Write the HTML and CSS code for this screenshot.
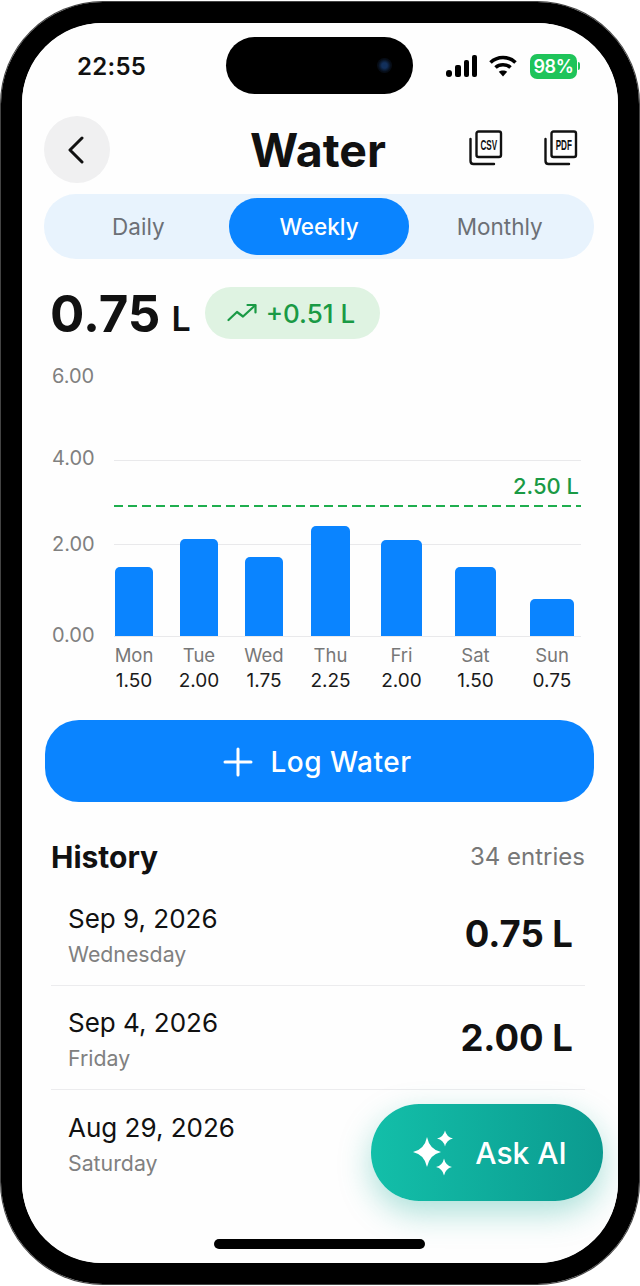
FILE: index.html
```html
<!DOCTYPE html>
<html lang="en">
<head>
    <meta charset="UTF-8">
    <meta name="viewport" content="width=device-width, initial-scale=1.0">
    <title>Water</title>
    <link rel="stylesheet" href="styles.css">
</head>
<body>

<div class="phone">
    <div class="screen">
        <div class="island"><span class="camera"></span></div>

        <div class="status-bar">
            <span class="time">22:55</span>
            <div class="status-icons">
                <svg class="signal" width="32" height="22" viewBox="0 0 32 22" fill="#000">
                    <rect x="0" y="15" width="6" height="7" rx="3"/>
                    <rect x="9" y="10" width="6" height="12" rx="2"/>
                    <rect x="18" y="5" width="5" height="17" rx="2"/>
                    <rect x="26" y="0" width="5" height="22" rx="2"/>
                </svg>
                <svg class="wifi" width="28" height="22" viewBox="0 0 28 22" fill="none" stroke="#000" stroke-width="3.6">
                    <path d="M1.5 7.5C8.5 .8 19.5 .8 26.5 7.5"/>
                    <path d="M6.5 12.5C10.5 8.8 17.5 8.8 21.5 12.5"/>
                    <path d="M14 21.5L9.8 16.8C12 15 16 15 18.2 16.8Z" fill="#000" stroke="none"/>
                </svg>
                <div class="battery">98%</div>
            </div>
        </div>

        <header class="top-bar">
            <button class="back-btn" type="button" aria-label="Back">
                <svg width="18" height="28" viewBox="0 0 18 28" fill="none" stroke="#111" stroke-width="3" stroke-linecap="round" stroke-linejoin="round">
                    <path d="M15 2L3 14L15 26"/>
                </svg>
            </button>
            <h1>Water</h1>
            <div class="export-icons">
                <svg width="36" height="36" viewBox="0 0 36 36" fill="none" stroke="#111" stroke-width="2.4" stroke-linecap="round">
                    <rect x="7.500" y="1.500" width="24.500" height="25.500" rx="2"/>
                    <path d="M1.500 9V31C1.500 33 2.500 34 4.500 34H25"/>
                    <text class="file-tag" transform="translate(19.800 19.500) scale(.58 1)" text-anchor="middle">CSV</text>
                </svg>
                <svg width="36" height="36" viewBox="0 0 36 36" fill="none" stroke="#111" stroke-width="2.4" stroke-linecap="round">
                    <rect x="7.500" y="1.500" width="24.500" height="25.500" rx="2"/>
                    <path d="M1.500 9V31C1.500 33 2.500 34 4.500 34H25"/>
                    <text class="file-tag" transform="translate(19.800 19.500) scale(.58 1)" text-anchor="middle">PDF</text>
                </svg>
            </div>
        </header>

        <nav class="tabs">
            <a href="#">Daily</a>
            <a href="#" class="active">Weekly</a>
            <a href="#">Monthly</a>
        </nav>

        <section class="summary">
            <span class="total">0.75</span>
            <span class="total-unit">L</span>
            <div class="trend">
                <svg width="30" height="20" viewBox="0 0 30 20" fill="none" stroke="#1a9a45" stroke-width="2.200" stroke-linecap="round" stroke-linejoin="round">
                    <path d="M1.500 17L10 9L16 13.500L28 2.500"/>
                    <path d="M20.500 2H28.500V9.500"/>
                </svg>
                <span>+0.51 L</span>
            </div>
        </section>

        <section class="chart">
            <div class="plot">
                <span class="y-label y6">6.00</span>
                <span class="y-label y4">4.00</span>
                <span class="y-label y2">2.00</span>
                <span class="y-label y0">0.00</span>
                <div class="grid-line line4"></div>
                <div class="grid-line line2"></div>
                <div class="goal-line"></div>
                <span class="goal-label">2.50 L</span>
                <div class="chart-cols bars">
                    <div class="bar" style="height:69px"></div>
                    <div class="bar" style="height:97px"></div>
                    <div class="bar" style="height:79px"></div>
                    <div class="bar" style="height:110px"></div>
                    <div class="bar" style="height:96px"></div>
                    <div class="bar" style="height:69px"></div>
                    <div class="bar" style="height:37px"></div>
                </div>
            </div>
            <div class="chart-cols days">
                <div class="day"><span>Mon</span><b>1.50</b></div>
                <div class="day"><span>Tue</span><b>2.00</b></div>
                <div class="day"><span>Wed</span><b>1.75</b></div>
                <div class="day"><span>Thu</span><b>2.25</b></div>
                <div class="day"><span>Fri</span><b>2.00</b></div>
                <div class="day"><span>Sat</span><b>1.50</b></div>
                <div class="day"><span>Sun</span><b>0.75</b></div>
            </div>
        </section>

        <button class="log-btn" type="button">
            <svg width="30" height="30" viewBox="0 0 30 30" stroke="#fff" stroke-width="3" stroke-linecap="round">
                <path d="M15 2V28M2 15H28"/>
            </svg>
            Log Water
        </button>

        <section class="history">
            <div class="history-head">
                <h2>History</h2>
                <span>34 entries</span>
            </div>
            <div class="entry">
                <div class="entry-info"><div class="entry-date">Sep 9, 2026</div><div class="entry-day">Wednesday</div></div>
                <div class="entry-value">0.75 L</div>
            </div>
            <div class="entry">
                <div class="entry-info"><div class="entry-date">Sep 4, 2026</div><div class="entry-day">Friday</div></div>
                <div class="entry-value">2.00 L</div>
            </div>
            <div class="entry">
                <div class="entry-info"><div class="entry-date">Aug 29, 2026</div><div class="entry-day">Saturday</div></div>
            </div>
        </section>

        <button class="ask-ai" type="button">
            <svg width="44" height="46" viewBox="0 0 44 46" fill="#fff">
                <path d="M15 7Q17.500 19.500 29 22Q17.500 24.500 15 37Q12.500 24.500 1 22Q12.500 19.500 15 7Z"/>
                <path d="M33 .5Q34.500 7 41 8.500Q34.500 10 33 16.500Q31.500 10 25 8.500Q31.500 7 33 .5Z"/>
                <path d="M32 28.500Q33.500 35.500 40 37Q33.500 38.500 32 45.500Q30.500 38.500 24 37Q30.500 35.500 32 28.500Z"/>
            </svg>
            Ask AI
        </button>

        <div class="home-bar"></div>
    </div>
</div>

</body>
</html>
```

FILE: styles.css
```css
* {
    box-sizing: border-box;
}
body {
    margin: 0;
    background: #fff;
    font-family: Inter, "Liberation Sans", sans-serif;
    color: #111;
}
button {
    font-family: inherit;
    border: none;
    cursor: pointer;
}
.phone {
    width: 638px;
    height: 1282px;
    margin: 2px 1px;
    border: 21px solid #000;
    border-radius: 102px;
    box-shadow: 0 0 0 1px #444;
}
.screen {
    position: relative;
    height: 100%;
    padding: 0 24px 0 22px;
    background: #fefefe;
    border-radius: 80px;
    overflow: hidden;
}
.island {
    position: absolute;
    top: 14px;
    left: 204px;
    width: 187px;
    height: 57px;
    background: #000;
    border-radius: 29px;
}
.camera {
    position: absolute;
    top: 21px;
    right: 21px;
    width: 15px;
    height: 15px;
    border-radius: 50%;
    background: radial-gradient(circle, #12305c 0 25%, #060c16 60%);
}

/* status bar */
.status-bar {
    height: 86px;
    display: flex;
    align-items: center;
    justify-content: space-between;
    padding: 0 17px 0 33px;
}
.time {
    font-size: 24px;
    font-weight: 600;
    letter-spacing: 0.3px;
}
.status-icons {
    display: flex;
    align-items: center;
    gap: 12px;
}
.signal {
    margin-right: -1px;
}
.battery {
    position: relative;
    width: 47px;
    height: 25px;
    margin-left: 1px;
    background: #1fc45a;
    border-radius: 7px;
    color: #fff;
    font-size: 18px;
    font-weight: 600;
    line-height: 25px;
    text-align: center;
    letter-spacing: -0.3px;
}
.battery::after {
    content: "";
    position: absolute;
    top: 8px;
    right: -3px;
    width: 2px;
    height: 8px;
    background: #1fc45a;
    border-radius: 0 2px 2px 0;
}

/* header */
.top-bar {
    margin-top: 7px;
    display: grid;
    grid-template-columns: 1fr auto 1fr;
    align-items: center;
    height: 67px;
}
.back-btn {
    width: 66px;
    height: 67px;
    border-radius: 50%;
    background: #f0f0f1;
    display: flex;
    align-items: center;
    justify-content: center;
    padding: 0 3px 0 0;
}
.top-bar h1 {
    margin: 0 2px 0 0;
    font-size: 46.500px;
    font-weight: 700;
}
.export-icons {
    display: flex;
    justify-content: flex-end;
    gap: 39px;
    padding: 0 14px 3px 0;
}
.file-tag {
    font-family: "Liberation Sans", sans-serif;
    font-size: 14px;
    font-weight: 700;
    fill: #111;
    stroke: none;
}

/* tabs */
.tabs {
    margin-top: 11px;
    height: 65px;
    padding: 4px;
    display: grid;
    grid-template-columns: repeat(3, 1fr);
    background: #e8f3fd;
    border-radius: 32px;
}
.tabs a {
    display: flex;
    align-items: center;
    justify-content: center;
    border-radius: 28px;
    color: #6c7076;
    font-size: 22.500px;
    text-decoration: none;
}
.tabs a.active {
    background: #0a84ff;
    color: #fff;
    font-weight: 500;
}

/* summary */
.summary {
    margin-top: 28px;
    height: 52px;
    padding-left: 6px;
    display: flex;
    align-items: center;
}
.total {
    font-size: 51px;
    font-weight: 700;
}
.total-unit {
    margin: 10px 14px 0 11px;
    font-size: 34px;
    font-weight: 600;
}
.trend {
    width: 175px;
    height: 52px;
    padding-left: 22px;
    display: flex;
    align-items: center;
    gap: 9px;
    background: #dff3e2;
    border-radius: 26px;
    color: #1a9a45;
    font-size: 26px;
    font-weight: 500;
}

/* chart */
.chart {
    margin-top: 21px;
}
.plot {
    position: relative;
    height: 277px;
    margin-left: 70px;
    width: 467px;
    border-bottom: 1px solid #e9e9eb;
}
.y-label {
    position: absolute;
    left: -62px;
    color: #808080;
    font-size: 20px;
    line-height: 24px;
}
.y6 { top: 4px; }
.y4 { top: 86px; }
.y2 { top: 172px; }
.y0 { top: 263px; }
.grid-line {
    position: absolute;
    left: 0;
    right: 0;
    height: 1px;
    background: #e9e9eb;
}
.line4 { top: 100px; }
.line2 { top: 184px; }
.goal-line {
    position: absolute;
    top: 145px;
    left: 0;
    right: 0;
    height: 2px;
    background: repeating-linear-gradient(to right, #1fae4e 0 9px, transparent 9px 14px);
}
.goal-label {
    position: absolute;
    top: 112px;
    right: 2px;
    color: #1a9a45;
    font-size: 22px;
    font-weight: 500;
    line-height: 28px;
}
.chart-cols {
    display: grid;
    grid-template-columns: 65px 65px 66px 70px 74px 75px 44px;
}
.bars {
    position: absolute;
    left: 1px;
    right: 0;
    bottom: 0;
    align-items: end;
}
.days {
    margin-left: 71px;
    padding-top: 6px;
}
.chart-cols > :nth-child(1),
.chart-cols > :nth-child(2),
.chart-cols > :nth-child(3) { width: 38px; }
.chart-cols > :nth-child(4) { width: 39px; }
.chart-cols > :nth-child(5),
.chart-cols > :nth-child(6) { width: 41px; }
.chart-cols > :nth-child(7) { width: 44px; }
.bar {
    background: #0a84ff;
    border-radius: 5px 5px 0 0;
}
.day {
    display: flex;
    flex-direction: column;
    align-items: center;
    white-space: nowrap;
    font-size: 19px;
    line-height: 25px;
}
.day span {
    color: #777;
    font-size: 18.500px;
}
.day b {
    font-weight: 400;
    color: #1a1a1a;
}

/* log button */
.log-btn {
    display: flex;
    align-items: center;
    justify-content: center;
    gap: 17px;
    width: 549px;
    height: 82px;
    margin: 27px 0 0 1px;
    padding: 2px 4px 0 0;
    background: #0a84ff;
    border-radius: 34px;
    color: #fff;
    font-size: 28px;
    font-weight: 500;
    letter-spacing: 0.5px;
}

/* history */
.history {
    margin: 29px 9px 0 7px;
}
.history-head {
    display: flex;
    justify-content: space-between;
    align-items: center;
    height: 51px;
}
.history-head h2 {
    margin: 0;
    font-size: 30px;
    font-weight: 700;
}
.history-head span {
    color: #777;
    font-size: 24px;
}
.entry {
    display: flex;
    align-items: center;
    justify-content: space-between;
    height: 104px;
    padding: 0 12px 0 17px;
    border-bottom: 1px solid #ececee;
}
.entry:last-child {
    border-bottom: none;
}
.entry-info {
    padding-top: 6px;
}
.entry-date {
    font-size: 26px;
    line-height: 36px;
}
.entry-day {
    color: #808080;
    font-size: 21.300px;
    line-height: 35px;
}
.entry-value {
    font-size: 36.500px;
    font-weight: 700;
}

/* floating button */
.ask-ai {
    position: absolute;
    left: 349px;
    top: 1081px;
    width: 232px;
    height: 97px;
    padding: 0 0 0 5px;
    display: flex;
    align-items: center;
    justify-content: center;
    gap: 19px;
    background: linear-gradient(90deg, #13bfa9, #0b9a8f);
    border-radius: 48px;
    box-shadow: 0 12px 32px rgba(16, 170, 150, 0.35);
    color: #fff;
    font-size: 30px;
    font-weight: 500;
}
.home-bar {
    position: absolute;
    left: 192px;
    bottom: 14px;
    width: 211px;
    height: 10px;
    background: #000;
    border-radius: 5px;
}
```
